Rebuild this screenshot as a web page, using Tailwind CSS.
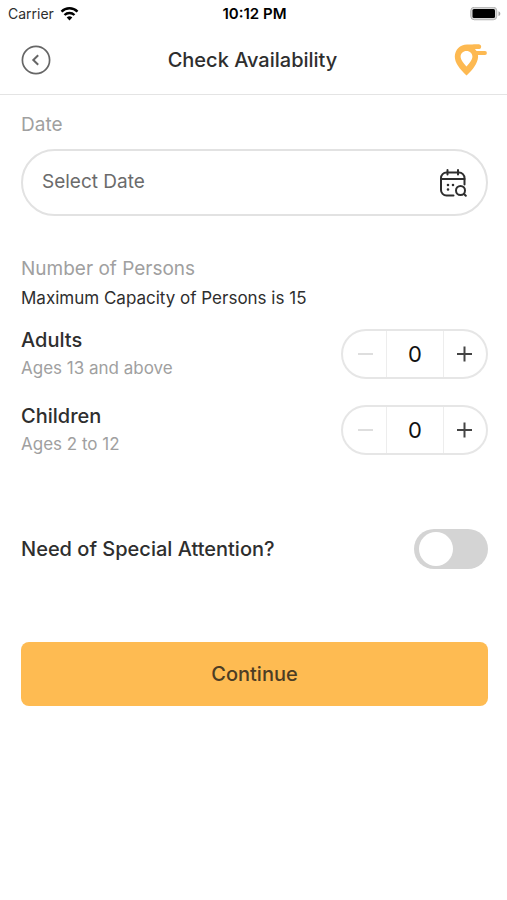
<!DOCTYPE html>
<html lang="en">
  <head>
    <meta charset="UTF-8" />
    <meta name="viewport" content="width=device-width, initial-scale=1.0" />
    <title>Check Availability</title>

    <script src="https://cdn.jsdelivr.net/npm/@tailwindcss/browser@4"></script>
  </head>
  <body class="bg-white font-['Inter',sans-serif] text-[#2e2e2e]">
    <!-- Status bar -->
    <div class="grid grid-cols-3 items-center h-7 pl-2 pr-1.5 text-[15px] text-black">
      <div class="flex items-center gap-1.5 text-sm text-[#2e2e2e]">
        Carrier
        <svg class="w-[19px] h-[14px]" viewBox="0 0 18 14" fill="none" stroke="#000" stroke-width="2.4">
          <path d="M1 4.600a11.400 11.400 0 0 1 16 0" />
          <path d="M4 8a7.200 7.200 0 0 1 10 0" />
          <path d="M9 13.400 6.200 10.500a4 4 0 0 1 5.600 0z" fill="#000" stroke="none" />
        </svg>
      </div>
      <div class="text-center font-semibold">10:12 PM</div>
      <svg class="justify-self-end w-[31px] h-[14px]" viewBox="0 0 31 14">
        <rect x="0.75" y="0.25" width="26" height="12.5" rx="3.5" fill="#d8d8d8" stroke="#b0b0b0" stroke-width="1" />
        <rect x="2.5" y="2" width="22.5" height="9" rx="1.500" fill="#000" />
        <path d="M28.5 4.2c2.4.8 2.400 4 0 4.800z" fill="#a0a0a0" />
      </svg>
    </div>

    <!-- Header -->
    <header class="flex items-center justify-between h-[67px] pl-[21px] pr-[19px] pb-[3px] border-b border-[#e4e4e4]">
      <button type="button" aria-label="Back">
        <svg class="w-[30px] h-[30px]" viewBox="0 0 30 30" fill="none" stroke="#666" stroke-width="1.7">
          <circle cx="15" cy="15" r="13.6" />
          <path d="m17.2 10.2-4.900 4.800 4.900 4.800" stroke-width="2" />
        </svg>
      </button>
      <h1 class="text-xl font-medium">Check Availability</h1>
      <svg class="w-[34px] h-[34px]" viewBox="0 0 34 34" fill="none" stroke="#fdb951" stroke-linecap="round">
        <path
          fill="#fdb951"
          stroke="none"
          fill-rule="evenodd"
          d="M13 1.500h12.500v4.400h-4.600c2.300 2 3.400 4.900 3.200 8-.4 6-5 12.500-11.600 18.700C5.500 26 .8 19.800.8 13.600.8 7 6 1.500 13 1.500zM12.500 8c-3.600 0-5.900 2.500-5.900 5.600 0 3.300 3 7 5.900 9.800 2.900-2.800 5.900-6.500 5.900-9.800C18.400 10.500 16.100 8 12.500 8z"
        />
        <path d="M20 3.700h5" stroke-width="4.400" />
        <path d="M22 10h9" stroke-width="3.800" />
      </svg>
    </header>

    <main class="pl-[21px] pr-[19px] pt-4">
      <!-- Date -->
      <label for="date" class="block text-[19px] leading-7 text-[#a0a0a0]">Date</label>
      <div class="flex items-center h-[67px] mt-2.5 px-[19px] border-2 border-[#e2e2e2] rounded-full">
        <input
          id="date"
          type="text"
          placeholder="Select Date"
          class="flex-1 min-w-0 text-[19px] outline-none placeholder:text-[#6b6b6b]"
        />
        <button type="button" aria-label="Open calendar">
          <svg class="w-7 h-7" viewBox="0 0 28 28" fill="none" stroke="#2e2e2e" stroke-width="2" stroke-linecap="round">
            <path d="M14.500 26.500H7.500A5.500 5.500 0 0 1 2 21V9a5.500 5.500 0 0 1 5.500-5.500h12.500A5.500 5.500 0 0 1 25.500 9v6.500" />
            <path d="M8.500 1v4.600M19 1v4.600M2 10h23.500" />
            <circle cx="21.500" cy="21.500" r="4.500" />
            <path d="m25 25 1.800 1.800" />
            <path d="M9 16h.01M14 16h.01M9 20.500h.01" stroke-width="2.600" />
          </svg>
        </button>
      </div>

      <!-- Persons -->
      <h2 class="mt-[39px] text-[19px] leading-7 text-[#a0a0a0]">Number of Persons</h2>
      <p class="mt-[3px] text-[17px] leading-6">Maximum Capacity of Persons is 15</p>

      <div class="flex items-center justify-between mt-4">
        <div>
          <h3 class="text-xl leading-7 font-medium">Adults</h3>
          <p class="text-[17px] leading-7 text-[#a0a0a0]">Ages 13 and above</p>
        </div>
        <div class="flex h-[50px] border-2 border-[#e6e6e6] rounded-full">
          <button type="button" class="flex items-center justify-center w-[43px]" aria-label="Fewer adults" disabled>
            <svg class="w-4 h-4" viewBox="0 0 16 16" stroke="#dedede" stroke-width="2"><path d="M1 8h15" /></svg>
          </button>
          <output class="flex items-center justify-center w-[58px] border-x border-[#ededed] text-[22px] text-[#111]" id="adults">0</output>
          <button type="button" class="flex items-center justify-center w-[42px]" aria-label="More adults">
            <svg class="w-4 h-4" viewBox="0 0 16 16" stroke="#444" stroke-width="2"><path d="M0 8h15M7.500 .5v15" /></svg>
          </button>
        </div>
      </div>

      <div class="flex items-center justify-between mt-5">
        <div>
          <h3 class="text-xl leading-7 font-medium">Children</h3>
          <p class="text-[17px] leading-7 text-[#a0a0a0]">Ages 2 to 12</p>
        </div>
        <div class="flex h-[50px] border-2 border-[#e6e6e6] rounded-full">
          <button type="button" class="flex items-center justify-center w-[43px]" aria-label="Fewer children" disabled>
            <svg class="w-4 h-4" viewBox="0 0 16 16" stroke="#dedede" stroke-width="2"><path d="M1 8h15" /></svg>
          </button>
          <output class="flex items-center justify-center w-[58px] border-x border-[#ededed] text-[22px] text-[#111]" id="children">0</output>
          <button type="button" class="flex items-center justify-center w-[42px]" aria-label="More children">
            <svg class="w-4 h-4" viewBox="0 0 16 16" stroke="#444" stroke-width="2"><path d="M0 8h15M7.500 .5v15" /></svg>
          </button>
        </div>
      </div>

      <!-- Special attention -->
      <div class="flex items-center justify-between mt-[71px]">
        <label for="attention" class="text-xl font-medium">Need of Special Attention?</label>
        <input
          id="attention"
          type="checkbox"
          role="switch"
          class="appearance-none flex items-center w-[74px] h-10 px-[5px] rounded-full bg-[#d4d4d4] before:block before:size-[34px] before:rounded-full before:bg-white checked:justify-end checked:bg-[#febb52]"
        />
      </div>

      <button id="continue" type="button" class="w-full h-16 mt-[73px] rounded-lg bg-[#febb52] text-xl font-medium text-[#4d3d24]">
        Continue
      </button>
    </main>

    <script>
      // Steppers: minus stays disabled at zero, total is capped
      const MAX_PERSONS = 15;
      const outputs = document.querySelectorAll("output");

      const total = () =>
        [...outputs].reduce((sum, output) => sum + Number(output.value), 0);

      outputs.forEach((output) => {
        const minus = output.previousElementSibling;
        const plus = output.nextElementSibling;

        minus.addEventListener("click", () => {
          output.value = Number(output.value) - 1;
          minus.disabled = output.value === "0";
        });

        plus.addEventListener("click", () => {
          if (total() < MAX_PERSONS) {
            output.value = Number(output.value) + 1;
            minus.disabled = false;
          }
        });
      });
    </script>
  </body>
</html>
